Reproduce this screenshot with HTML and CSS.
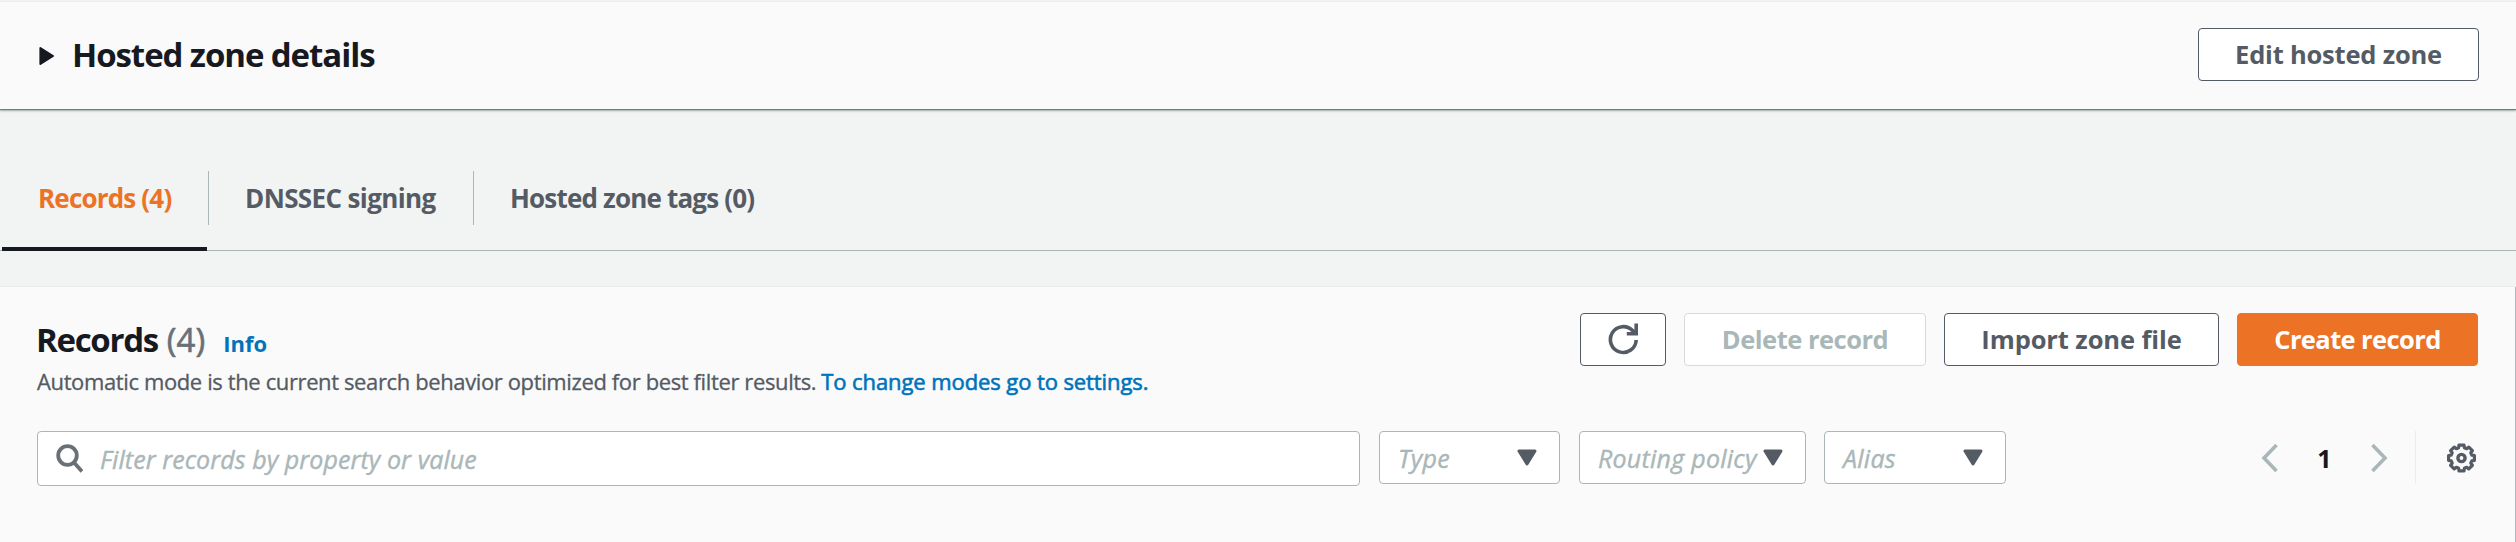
FILE: index.html
```
<!DOCTYPE html>
<html lang="en">
<head>
<meta charset="utf-8">
<title>Hosted zone records</title>
<link rel="stylesheet" href="styles.css">
</head>
<body>
<header class="details">
  <svg class="expand" width="17" height="20" viewBox="0 0 17 20"><path d="M2.4 2L15 10L2.4 18Z" fill="#16191f" stroke="#16191f" stroke-width="2" stroke-linejoin="round"/></svg>
  <h2 class="title details-title">Hosted zone details</h2>
  <button class="btn btn-edit">Edit hosted zone</button>
</header>
<nav class="tabs">
  <a class="tab tab-active"><span class="label">Records (4)</span></a>
  <a class="tab tab-dnssec"><span class="label label-dnssec">DNSSEC signing</span></a>
  <a class="tab tab-tags"><span class="label">Hosted zone tags (0)</span></a>
</nav>
<main class="panel">
  <div class="panel-head">
    <div class="heading">
      <div class="heading-line"><h2 class="title">Records</h2><span class="count">(4)</span><a class="info">Info</a></div>
      <p class="desc"><span class="desc-text">Automatic mode is the current search behavior optimized for best filter results.</span><a class="link">To change modes go to settings.</a></p>
    </div>
    <div class="actions">
      <button class="btn btn-refresh" aria-label="Refresh"><svg width="32" height="32" viewBox="0 0 32 32" fill="none" stroke="#545b64" stroke-width="3.6"><path d="M29.2 17A12.9 12.9 0 1 1 25.8 7.8L28 10.5"/><path d="M29.2 0.5V10.7H19.8"/></svg></button>
      <button class="btn btn-delete" disabled>Delete record</button>
      <button class="btn btn-import">Import zone file</button>
      <button class="btn btn-create">Create record</button>
    </div>
  </div>
  <div class="filters">
    <div class="search">
      <svg width="28" height="32" viewBox="0 0 28 32" fill="none" stroke="#687078" stroke-width="3.8"><circle cx="12.5" cy="12.5" r="9.3"/><path d="M19 19.5L27 28.5"/></svg>
      <span class="placeholder">Filter records by property or value</span>
    </div>
    <div class="select select-type"><span class="placeholder">Type</span><svg class="caret" width="20" height="18" viewBox="0 0 20 18"><path d="M2 2H18L10 15Z"/></svg></div>
    <div class="select select-routing"><span class="placeholder">Routing policy</span><svg class="caret" width="20" height="18" viewBox="0 0 20 18"><path d="M2 2H18L10 15Z"/></svg></div>
    <div class="select select-alias"><span class="placeholder">Alias</span><svg class="caret" width="20" height="18" viewBox="0 0 20 18"><path d="M2 2H18L10 15Z"/></svg></div>
    <div class="pager">
      <svg width="18" height="30" viewBox="0 0 18 30" fill="none" stroke="#aab7b8" stroke-width="3.6"><path d="M15.5 2L3 15L15.5 28"/></svg>
      <span class="page">1</span>
      <svg width="18" height="30" viewBox="0 0 18 30" fill="none" stroke="#aab7b8" stroke-width="3.6"><path d="M2.5 2L15 15L2.5 28"/></svg>
    </div>
    <div class="prefs"><svg width="32" height="32" viewBox="-15.5 -16 32 32" fill="none" stroke="#545b64" stroke-linejoin="round"><path stroke-width="3.2" d="M10.3-2.9L12.9-2.5V2.5L10.3 2.9L9.3 5.2L10.9 7.3L7.3 10.9L5.2 9.3L2.9 10.3L2.5 12.9H-2.5L-2.9 10.3L-5.2 9.3L-7.3 10.9L-10.9 7.3L-9.3 5.2L-10.3 2.9L-12.9 2.5V-2.5L-10.3-2.9L-9.3-5.2L-10.9-7.3L-7.3-10.9L-5.2-9.3L-2.9-10.3L-2.5-12.9H2.5L2.9-10.3L5.2-9.3L7.3-10.9L10.9-7.3L9.3-5.2Z"/><circle r="3.6" stroke-width="3.4"/></svg></div>
  </div>
</main>
</body>
</html>
```
FILE: styles.css
```
* { box-sizing: border-box; }
body {
  margin: 0;
  height: 542px;
  overflow: hidden;
  background: #f2f3f3;
  color: #16191f;
  font-family: "Open Sans", "Noto Sans", sans-serif;
}
h2, p { margin: 0; }

.title { font-size: 33px; line-height: 44px; font-weight: 700; letter-spacing: -1.3px; white-space: nowrap; }

.details {
  display: flex;
  align-items: center;
  height: 108px;
  margin-top: 1px;
  padding: 0 37px 0 38px;
  border-top: 1px solid #eaeded;
  background: #fafafa;
  box-shadow: 0 1px 1px #6f7f80, 0 2px 2px #aab7b8;
}
.details-title { margin: -2px auto 0 17px; letter-spacing: -1.07px; }

.btn {
  display: flex;
  align-items: center;
  justify-content: center;
  height: 53px;
  padding: 0 0 1px;
  border: 1px solid #545b64;
  border-radius: 4px;
  background: #fff;
  color: #545b64;
  font: 700 25.5px "Open Sans", "Noto Sans", sans-serif;
  white-space: nowrap;
}
.btn-edit { width: 281px; margin-top: -2px; letter-spacing: -0.2px; }
.btn-refresh { width: 86px; }
.btn-delete { width: 242px; border-color: #d5dbdb; color: #aab7b8; letter-spacing: -0.5px; }
.btn-import { width: 275px; letter-spacing: -0.1px; }
.btn-create { width: 241px; border-color: #ec7226; background: #ec7226; color: #fff; letter-spacing: -0.6px; }

.tabs { display: flex; align-items: flex-end; height: 142px; border-bottom: 1px solid #aab7b8; }
.tab { position: relative; display: flex; height: 107px; color: #545b64; }
.tab-active { width: 209px; padding-left: 38px; color: #ec7226; }
.tab-active::before { content: ""; position: absolute; left: 2px; right: 2px; bottom: -1px; height: 4px; background: #16191f; }
.tab-dnssec { width: 265px; padding-left: 36px; }
.tab-tags { padding-left: 36px; }
.tab:not(.tab-tags)::after { content: ""; position: absolute; right: 0; top: 28px; width: 1px; height: 54px; background: #aab7b8; }
.label { padding-top: 37px; font-size: 26px; line-height: 36px; font-weight: 700; letter-spacing: -0.82px; white-space: nowrap; }
.label-dnssec { letter-spacing: -0.62px; }

.panel {
  height: 260px;
  margin: 35px 1px 0 0;
  padding: 26px 37px 0 37px;
  border-top: 1px solid #eaeded;
  background: #fafafa;
  box-shadow: 1px 1px 1px #aab7b8;
}
.panel-head { display: flex; justify-content: space-between; align-items: flex-start; height: 118px; }
.heading { padding-top: 5px; margin-left: -1px; }
.heading-line { display: flex; align-items: baseline; height: 44px; }
.count { margin-left: 9px; color: #687078; font-size: 33px; line-height: 44px; -webkit-text-stroke: 0.6px #687078; }
.info { margin-left: 18px; color: #0073bb; font-size: 22px; font-weight: 700; }
.desc { display: flex; gap: 5px; margin-top: 3px; padding-left: 1px; color: #545b64; font-size: 22px; line-height: 32px; white-space: nowrap; }
.desc-text { letter-spacing: -0.38px; -webkit-text-stroke: 0.3px #545b64; }
.link { color: #0073bb; letter-spacing: -0.09px; -webkit-text-stroke: 0.6px #0073bb; }
.actions { display: flex; gap: 18px; }

.filters { display: flex; align-items: flex-start; }
.search, .select { display: flex; align-items: center; border: 1px solid #aab7b8; border-radius: 4px; background: #fff; }
.search { width: 1323px; height: 55px; padding-left: 17px; gap: 17px; }
.placeholder { color: #aab7b8; font-size: 25px; line-height: 34px; font-style: italic; letter-spacing: 0.08px; white-space: nowrap; -webkit-text-stroke: 0.4px #aab7b8; }
.select { justify-content: space-between; height: 53px; padding: 0 22.5px 0 18px; }
.select .placeholder { letter-spacing: 0.25px; }
.select-type { width: 181px; margin-left: 19px; }
.select-routing { width: 227px; margin-left: 19px; }
.select-alias { width: 182px; margin-left: 18px; }
.caret { flex: none; fill: #545b64; stroke: #545b64; stroke-width: 3; stroke-linejoin: round; }
.pager { display: flex; align-items: center; height: 53px; margin-left: auto; }
.page { width: 91px; text-align: center; font-size: 25px; font-weight: 700; }
.prefs { display: flex; align-items: center; height: 53px; margin-left: 27px; padding-left: 30px; border-left: 1px solid #eaeded; }
```
